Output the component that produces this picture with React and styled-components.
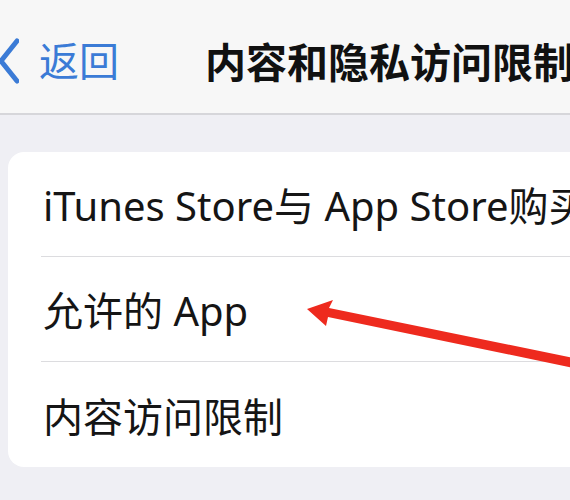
import React from "react"
import styled, { createGlobalStyle } from "styled-components"

const Global = createGlobalStyle`
  html, body {
    margin: 0;
    padding: 0;
    background: #efeff4;
  }
  body {
    font-family: "Noto Sans", "Noto Sans CJK SC", sans-serif;
  }
`

const Page = styled.div`
  position: relative;
  width: 570px;
  height: 500px;
  overflow: hidden;
  background: #efeff4;
`
const NavBar = styled.header`
  display: flex;
  align-items: center;
  height: 115px;
  padding-top: 8px;
  background: #f7f7f7;
  border-bottom: 2px solid #d6d6da;
  box-sizing: border-box;
  white-space: nowrap;
`
const BackButton = styled.div`
  display: flex;
  align-items: center;
  gap: 20px;
  margin-left: -1px;
  color: #3b7bd6;
  font-size: 40px;
  line-height: 1;
`
const Title = styled.h1`
  margin: 0 0 0 86px;
  font-size: 41px;
  font-weight: 700;
  color: #111;
  line-height: 1;
  font-family: "Noto Sans CJK SC", sans-serif;
`
const Body = styled.main`
  padding: 37px 0 0 8px;
`
const Card = styled.section`
  background: #fff;
  border-radius: 16px;
  margin-right: -30px;
  padding-left: 33px;
`
const Row = styled.div`
  display: flex;
  align-items: center;
  height: 105px;
  padding-left: 2px;
  box-sizing: border-box;
  font-size: 40px;
  color: #151515;
  white-space: nowrap;
  border-bottom: ${(p) => (p.$last ? "none" : "1.5px solid #dcdcdf")};
`
const ArrowLayer = styled.svg`
  position: absolute;
  left: 0;
  top: 0;
  pointer-events: none;
`

const Chevron = () => (
  <svg width="20" height="46" viewBox="0 0 20 46">
    <path
      d="M18 3 L2 23 L18 43"
      fill="none"
      stroke="#3b7bd6"
      strokeWidth="5"
      strokeLinecap="round"
      strokeLinejoin="round"
    />
  </svg>
)

const rows = ["iTunes Store与 App Store购买", "允许的 App", "内容访问限制"]

const App = () => {
  return (
    <Page>
      <Global />
      <NavBar>
        <BackButton>
          <Chevron />
          <span>返回</span>
        </BackButton>
        <Title>内容和隐私访问限制</Title>
      </NavBar>
      <Body>
        <Card>
          {rows.map((r, i) => (
            <Row key={r} $last={i === rows.length - 1}>
              {r}
            </Row>
          ))}
        </Card>
      </Body>
      <ArrowLayer width="570" height="500" viewBox="0 0 570 500">
        <polygon
          points="307,309 333,300 329,308 574,358 574,368 328,317 326,326"
          fill="#ee2a1e"
        />
      </ArrowLayer>
    </Page>
  )
}

export default App
